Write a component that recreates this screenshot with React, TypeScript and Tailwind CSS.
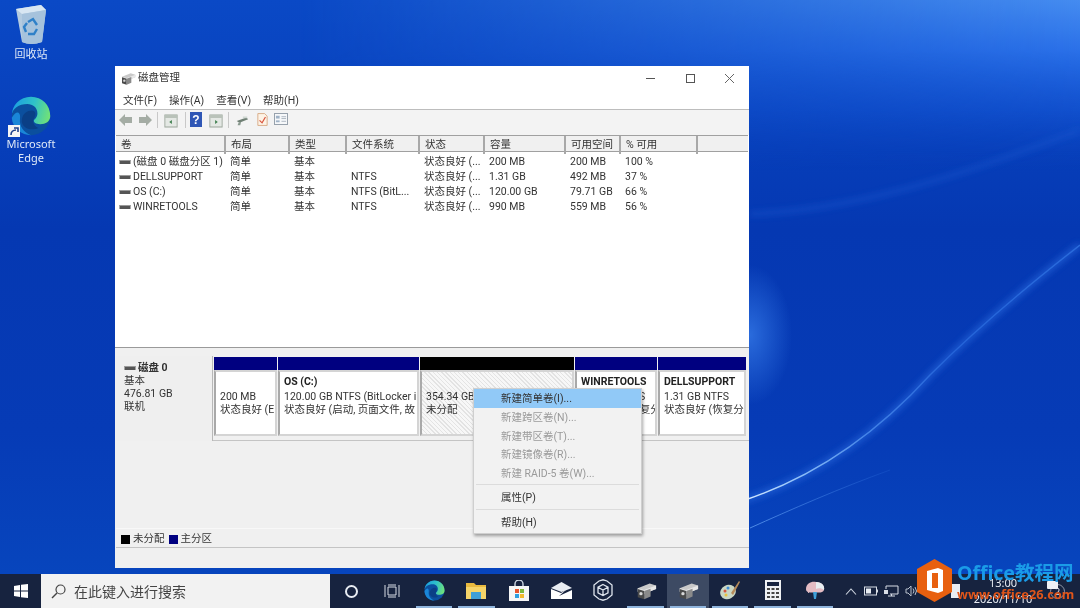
import { FC, ReactNode } from "react";

const font = "[font-family:'Roboto','Noto_Sans_CJK_SC',sans-serif]";
const deskFont = "[font-family:'Noto_Sans','Noto_Sans_CJK_SC',sans-serif]";

const columns = ["卷", "布局", "类型", "文件系统", "状态", "容量", "可用空间", "% 可用", ""];

const rows = [
  ["(磁盘 0 磁盘分区 1)", "简单", "基本", "", "状态良好 (...", "200 MB", "200 MB", "100 %"],
  ["DELLSUPPORT", "简单", "基本", "NTFS", "状态良好 (...", "1.31 GB", "492 MB", "37 %"],
  ["OS (C:)", "简单", "基本", "NTFS (BitL...", "状态良好 (...", "120.00 GB", "79.71 GB", "66 %"],
  ["WINRETOOLS", "简单", "基本", "NTFS", "状态良好 (...", "990 MB", "559 MB", "56 %"],
];

const DriveIcon: FC = () => (
  <svg width="12" height="8" viewBox="0 0 12 8" className="mr-[2px] shrink-0">
    <rect x="0.5" y="2" width="11" height="4" fill="#555" />
    <rect x="0.5" y="2" width="11" height="1" fill="#9a9a9a" />
  </svg>
);

const DiskToolIcon: FC<{ size?: number }> = ({ size = 16 }) => (
  <svg width={size} height={size} viewBox="0 0 24 24">
    <path d="M3 10 L16 5 L23 7 L23 11 L10 16 L3 14Z" fill="#c9c9c9" />
    <path d="M3 10 L10 12 L23 7 L23 11 L10 16 L3 14Z" fill="#e8e8e8" />
    <path d="M3 11 L10 13 L10 22 L3 20Z" fill="#4a4a4a" />
    <path d="M10 13 L17 10.5 L17 19 L10 22Z" fill="#8a8a8a" />
    <circle cx="6.5" cy="16" r="1.8" fill="#d8d8d8" />
  </svg>
);

const EdgeIcon: FC<{ size: number; id: string }> = ({ size, id }) => (
  <svg width={size} height={size} viewBox="0 0 48 48">
    <defs>
      <linearGradient id={`${id}-a`} x1="0" y1="0.3" x2="1" y2="0.5">
        <stop offset="0" stopColor="#1b9de2" />
        <stop offset="0.55" stopColor="#2fc2c8" />
        <stop offset="1" stopColor="#6fe07a" />
      </linearGradient>
    </defs>
    <circle cx="24" cy="24" r="21" fill="#0b4f9e" />
    <path d="M3 26 C4 38 14 45 24 45 C16 42 11 35 12 27 C13 19 8 17 3 26Z" fill="#1a86d8" />
    <path
      d="M3 24 C3 12 12 3 24 3 C36 3 45 12 45 24 C45 30 40 33 34 33 C29 33 27 31 27 29 C28 27 31 26 31 21 C31 15 26 11 20 11 C11 11 3 16 3 24Z"
      fill={`url(#${id}-a)`}
    />
    <path d="M14 28 C15 21 20 18 25 18 C28 18 30 21 28 25 C25 29 26 34 32 37 C24 41 13 37 14 28Z" fill="#0a3f86" />
  </svg>
);

const Toolbar: FC = () => (
  <div className="flex h-[25px] items-start bg-[#f3f3f3] pl-[3px] pt-[2px]">
    <svg width="35" height="16" viewBox="0 0 35 16" className="shrink-0">
      <path d="M1 8 L7 2 V5 H14 V11 H7 V14Z" fill="#a4aca4" />
      <path d="M34 8 L28 2 V5 H21 V11 H28 V14Z" fill="#a4aca4" />
    </svg>
    <div className="ml-[4px] h-[16px] w-px bg-[#c8c8c8]" />
    <svg width="14" height="14" viewBox="0 0 16 14" preserveAspectRatio="none" className="ml-[6px] mt-[2px]">
      <rect x="1" y="1" width="14" height="12" fill="#e4e8e4" stroke="#9aa59a" />
      <rect x="1" y="1" width="14" height="3" fill="#b9c2b9" />
      <path d="M9 6 L6 8 L9 10Z" fill="#3f7f4f" />
    </svg>
    <div className="ml-[7px] h-[16px] w-px bg-[#c8c8c8]" />
    <svg width="12" height="15" viewBox="0 0 12 15" className="ml-[4px]">
      <rect width="12" height="15" fill="#2f56b5" />
      <text x="6" y="12" textAnchor="middle" fontSize="12" fontWeight="700" fill="#fff" fontFamily="Liberation Sans, sans-serif">?</text>
    </svg>
    <svg width="14" height="14" viewBox="0 0 16 14" preserveAspectRatio="none" className="ml-[7px] mt-[2px]">
      <rect x="1" y="1" width="14" height="12" fill="#e4e8e4" stroke="#9aa59a" />
      <rect x="1" y="1" width="14" height="3" fill="#b9c2b9" />
      <path d="M7 6 L10 8 L7 10Z" fill="#3f7f4f" />
    </svg>
    <div className="ml-[5px] h-[16px] w-px bg-[#c8c8c8]" />
    <svg width="14" height="14" viewBox="0 0 16 14" className="ml-[6px] mt-[1px]">
      <path d="M2 8 L13 4 L15 6 L5 10Z" fill="#6f7f74" />
      <path d="M4 10 L7 9 L6 13 L3 13Z" fill="#8a9a90" />
      <rect x="9" y="3" width="5" height="2" fill="#cfd8d2" />
    </svg>
    <svg width="11" height="15" viewBox="0 0 13 16" className="ml-[8px]">
      <path d="M1 1 H9 L12 4 V15 H1Z" fill="#fdf3e6" stroke="#d4a47c" />
      <path d="M3 9 L6 12 L10 5" fill="none" stroke="#d8553f" strokeWidth="1.4" />
    </svg>
    <svg width="14" height="12" viewBox="0 0 15 13" className="ml-[6px] mt-px">
      <rect x="0.5" y="0.5" width="14" height="12" fill="#f6f8fa" stroke="#8f9aa6" />
      <rect x="2" y="3" width="4" height="3" fill="#9fb2c6" />
      <rect x="2" y="8" width="4" height="2" fill="#9fb2c6" />
      <path d="M8 4 H13 M8 6 H13 M8 9 H13" stroke="#aab4be" />
    </svg>
  </div>
);

const VolumeTable: FC = () => (
  <div className="flex-1 bg-white px-px">
    <div className="grid h-[17px] grid-cols-[110px_64px_57px_73px_65px_81px_55px_77px_1fr] border-y border-y-[#a0a0a0] bg-[#f0f0f0]">
      {columns.map((c, i) => (
        <div key={i} className="border-r-2 border-r-[#a8a8a8] pl-[5px] leading-[18px] text-[#333] last:border-r-0">
          {c}
        </div>
      ))}
    </div>
    <div className="pt-px">
      {rows.map((r) => (
        <div key={r[0]} className="grid h-[15px] grid-cols-[110px_64px_57px_73px_65px_81px_55px_77px_1fr] leading-[17px] text-[#333]">
          {r.map((cell, i) =>
            i === 0 ? (
              <div key={i} className="flex items-center pl-[3px] whitespace-nowrap">
                <DriveIcon />
                <span>{cell}</span>
              </div>
            ) : (
              <div key={i} className="pl-[4px] whitespace-nowrap">
                {cell}
              </div>
            )
          )}
        </div>
      ))}
    </div>
  </div>
);

const partitions = [
  { w: "w-[63px]", head: "bg-[#000080]", title: "", lines: ["200 MB", "状态良好 (E"] },
  { w: "w-[141px]", head: "bg-[#000080]", title: "OS  (C:)", lines: ["120.00 GB NTFS (BitLocker i", "状态良好 (启动, 页面文件, 故"] },
  { w: "w-[154px]", head: "bg-black", title: "", lines: ["354.34 GB", "未分配"], free: true },
  { w: "w-[82px]", head: "bg-[#000080]", title: "WINRETOOLS", lines: ["990 MB NTFS", "状态良好 (恢复分"] },
  { w: "w-[88px]", head: "bg-[#000080]", title: "DELLSUPPORT", lines: ["1.31 GB NTFS", "状态良好 (恢复分"] },
];

const DiskRow: FC = () => (
  <div className="flex h-[85px] border-b border-b-[#c4c4c4]">
    <div className="h-[85px] w-[97px] shrink-0 border-r border-r-[#b8b8b8] bg-[#efefef] pl-[8px] pt-[5px] leading-[13px] text-[#333]">
      <div className="flex items-center font-bold">
        <DriveIcon />
        磁盘 0
      </div>
      <div>基本</div>
      <div>476.81 GB</div>
      <div>联机</div>
    </div>
    <div className="flex gap-px pl-px pt-[1px]">
      {partitions.map((p) => (
        <div key={p.title + p.lines[0]} className={`${p.w} h-[79px] shrink-0`}>
          <div className={`h-[13px] ${p.head}`} />
          <div
            className={`h-[66px] overflow-hidden border-2 border-[#d4d4d4] border-l-[#a9a9a9] pl-[4px] leading-[13px] text-[#333] whitespace-nowrap ${
              p.free ? "border-[#9d9d9d] bg-[repeating-linear-gradient(45deg,#e3e3e3_0px,#e3e3e3_1px,#f7f7f7_1px,#f7f7f7_3px)]" : "bg-white"
            }`}
          >
            <div className="h-[18px] pt-[3px] font-bold text-[#222]">{p.title}</div>
            {p.lines.map((l) => (
              <div key={l} className="overflow-hidden">
                {l}
              </div>
            ))}
          </div>
        </div>
      ))}
    </div>
  </div>
);

const menu = [
  { t: "新建简单卷(I)...", active: true },
  { t: "新建跨区卷(N)...", off: true },
  { t: "新建带区卷(T)...", off: true },
  { t: "新建镜像卷(R)...", off: true },
  { t: "新建 RAID-5 卷(W)...", off: true },
  { sep: "my-[2px]" },
  { t: "属性(P)" },
  { sep: "my-[3px]" },
  { t: "帮助(H)" },
];

const ContextMenu: FC = () => (
  <div className="absolute left-[358px] top-[322px] w-[169px] border border-[#cfcfcf] bg-[#f2f2f2] pb-px text-[10.5px] shadow-[1px_2px_3px_rgba(0,0,0,0.35)]">
    {menu.map((m, i) =>
      m.sep ? (
        <div key={i} className={`mx-[2px] h-px bg-[#dcdcdc] ${m.sep}`} />
      ) : (
        <div
          key={i}
          className={`flex h-[18.7px] items-center pl-[27px] pt-[1.5px] ${m.active ? "bg-[#91c9f7] text-[#222]" : ""} ${m.off ? "text-[#9a9a9a]" : "text-[#333]"}`}
        >
          {m.t}
        </div>
      )
    )}
  </div>
);

const DiskWindow: FC = () => (
  <div className={`absolute left-[115px] top-[66px] flex h-[502px] w-[634px] flex-col bg-[#f0f0f0] text-[10.5px] ${font}`}>
    <div className="flex h-[24px] items-center justify-between bg-white pl-[5px]">
      <div className="flex items-center gap-[2px] text-[#333]">
        <DiskToolIcon />
        <span>磁盘管理</span>
      </div>
      <div className="flex h-full items-center">
        <div className="flex w-[40px] justify-center">
          <div className="h-px w-[9px] bg-[#555]" />
        </div>
        <div className="flex w-[40px] justify-center">
          <div className="h-[9px] w-[9px] border border-[#555]" />
        </div>
        <svg width="40" height="11" viewBox="0 0 40 11" className="mr-[-1px]">
          <path d="M15 1 L24 10 M24 1 L15 10" stroke="#666" strokeWidth="1" />
        </svg>
      </div>
    </div>
    <div className="flex h-[20px] items-center gap-[12px] border-b border-b-[#bdbdbd] bg-white pl-[8px] pt-[3px] text-[#333]">
      <span>文件(F)</span>
      <span>操作(A)</span>
      <span>查看(V)</span>
      <span>帮助(H)</span>
    </div>
    <Toolbar />
    <div className="flex h-[212px] flex-col overflow-hidden">
      <VolumeTable />
    </div>
    <div className="h-[3px] border-t border-t-[#9a9a9a]" />
    <div className="h-[6px] bg-[#f0f0f0]" />
    <div className="flex flex-1 flex-col pl-px">
      <DiskRow />
      <div className="flex-1" />
      <div className="flex h-[19px] items-center gap-[3px] border-t border-t-[#f8f8f8] pl-[5px] pt-[2px] text-[#333]">
        <span className="h-[9px] w-[9px] bg-black" />
        <span className="mr-[1px]">未分配</span>
        <span className="h-[9px] w-[9px] bg-[#000080]" />
        <span>主分区</span>
      </div>
      <div className="h-[21px] border-t border-t-[#c4c4c4]" />
    </div>
    <ContextMenu />
  </div>
);

const Wallpaper: FC = () => (
  <svg className="absolute inset-0 h-full w-full" viewBox="0 0 1080 574" preserveAspectRatio="none">
    <defs>
      <linearGradient id="wp-base" x1="0" y1="0" x2="0" y2="1">
        <stop offset="0" stopColor="#0a49c6" />
        <stop offset="0.4" stopColor="#0538b2" />
        <stop offset="0.75" stopColor="#063bb6" />
        <stop offset="1" stopColor="#0745bd" />
      </linearGradient>
      <linearGradient id="wp-top" x1="0" y1="0" x2="0" y2="1">
        <stop offset="0" stopColor="#458cf0" />
        <stop offset="0.3" stopColor="#2a70e8" />
        <stop offset="0.65" stopColor="#1556d4" stopOpacity="0.7" />
        <stop offset="1" stopColor="#0a44c0" stopOpacity="0" />
      </linearGradient>
      <linearGradient id="wp-fade" x1="0" y1="0" x2="1" y2="0">
        <stop offset="0" stopColor="#000" />
        <stop offset="1" stopColor="#fff" />
      </linearGradient>
      <mask id="wp-mask">
        <rect x="300" width="780" height="200" fill="url(#wp-fade)" />
      </mask>
      <radialGradient id="wp-glow">
        <stop offset="0" stopColor="#2a6bdc" />
        <stop offset="1" stopColor="#2a6bdc" stopOpacity="0" />
      </radialGradient>
      <linearGradient id="wp-streak" x1="750" y1="0" x2="1080" y2="0" gradientUnits="userSpaceOnUse">
        <stop offset="0" stopColor="#cfe6ff" />
        <stop offset="0.15" stopColor="#8fc0f8" />
        <stop offset="0.35" stopColor="#4484e8" />
        <stop offset="0.6" stopColor="#2463d8" />
        <stop offset="1" stopColor="#2a6bdc" />
      </linearGradient>
      <linearGradient id="wp-streak2" x1="750" y1="0" x2="900" y2="0" gradientUnits="userSpaceOnUse">
        <stop offset="0" stopColor="#4f8ce8" />
        <stop offset="1" stopColor="#1c5bd0" stopOpacity="0.3" />
      </linearGradient>
      <filter id="wp-soft">
        <feGaussianBlur stdDeviation="3" />
      </filter>
    </defs>
    <rect width="1080" height="574" fill="url(#wp-base)" />
    <rect width="1080" height="170" fill="url(#wp-top)" mask="url(#wp-mask)" />
    <ellipse cx="750" cy="335" rx="42" ry="70" fill="url(#wp-glow)" />
    <path d="M745 500 C820 475 880 430 930 375 C980 325 1035 280 1080 245" fill="none" stroke="#2766dc" strokeWidth="6" filter="url(#wp-soft)" opacity="0.7" />
    <path d="M745 500 C820 475 880 430 930 375 C980 325 1035 280 1080 245" fill="none" stroke="url(#wp-streak)" strokeWidth="1.4" />
    <path d="M750 528 C790 510 840 488 890 470" fill="none" stroke="url(#wp-streak2)" strokeWidth="1" />
    <path d="M750 214 C850 210 950 180 1080 130" fill="none" stroke="#1c5cd2" strokeWidth="5" opacity="0.45" filter="url(#wp-soft)" />
  </svg>
);

const DesktopIcons: FC = () => (
  <>
    <div className={`absolute left-0 top-[4px] flex w-[62px] flex-col items-center text-[11px] text-[#dfe9f7] ${deskFont}`}>
      <svg width="34" height="40" viewBox="0 0 34 40">
        <path d="M2 5 L27 1 L32 6 L28 38 Q17 42 8 38Z" fill="#b4cbe0" />
        <path d="M2 5 L27 1 L32 6 L8 10Z" fill="#d8e6f2" />
        <path d="M8 10 L32 6 L28 38 Q17 42 8 38Z" fill="#a6c2dc" />
        <path d="M14 18 L19 15 L23 21 M23 25 L20 30 L14 30 M12 28 L10 23 L13 19" fill="none" stroke="#2f80c8" strokeWidth="2.4" />
      </svg>
      <span className="mt-[3px] leading-[14px]">回收站</span>
    </div>
    <div className={`absolute left-0 top-[94px] flex w-[62px] flex-col items-center text-[11px] leading-[14px] text-[#dfe9f7] ${deskFont}`}>
      <div className="relative h-[43px] w-[44px]">
        <EdgeIcon size={44} id="edge-desk" />
        <div className="absolute bottom-0 left-[-1px] flex h-[12px] w-[12px] items-center justify-center bg-[#f4f4f4]">
          <svg width="9" height="9" viewBox="0 0 9 9">
            <path d="M1 8 C1 5 3 3 6 3 M4 1 H8 V5" fill="none" stroke="#1d3f8a" strokeWidth="1.6" />
          </svg>
        </div>
      </div>
      <span>Microsoft</span>
      <span>Edge</span>
    </div>
  </>
);

const TaskSlot: FC<{ on?: boolean; active?: boolean; children: ReactNode }> = ({ on, active, children }) => (
  <div className={`flex h-full w-[42.3px] flex-col ${active ? "bg-[#3d4a63]" : ""}`}>
    <div className="flex flex-1 items-center justify-center">{children}</div>
    <div className={`mx-[3px] h-[2px] ${on ? "bg-[#8fb4dc]" : ""}`} />
  </div>
);

const Taskbar: FC = () => (
  <div className={`relative flex h-[34px] items-center bg-[#17233f] ${deskFont}`}>
    <div className="flex h-full w-[41px] items-center justify-center">
      <svg width="14" height="14" viewBox="0 0 14 14">
        <path d="M0 2 L6 1 V6.5 H0Z M7 0.8 L14 0 V6.5 H7Z M0 7.5 H6 V13 L0 12Z M7 7.5 H14 V14 L7 13.2Z" fill="#fff" />
      </svg>
    </div>
    <div className="flex h-full w-[289px] items-center gap-[8px] bg-[#f2f2f2] pl-[10px] text-[14px] text-[#444]">
      <svg width="15" height="15" viewBox="0 0 15 15">
        <circle cx="9.5" cy="5.5" r="4.5" fill="none" stroke="#444" strokeWidth="1.2" />
        <path d="M6 9 L1 14" stroke="#444" strokeWidth="1.4" />
      </svg>
      <span>在此键入进行搜索</span>
    </div>
    <div className="flex h-full w-[42px] items-center justify-center">
      <div className="h-[13px] w-[13px] rounded-full border-2 border-[#e8ecf2]" />
    </div>
    <div className="flex h-full w-[40px] items-center justify-center">
      <svg width="16" height="14" viewBox="0 0 16 14">
        <path d="M1 1 V13 M15 1 V13 M4 3 H12 V11 H4Z M4 1 H12 M4 13 H12" fill="none" stroke="#d8dde6" />
      </svg>
    </div>
    <div className="ml-px flex h-full">
      <TaskSlot on={true}>
        <EdgeIcon size={23} id="edge-task" />
      </TaskSlot>
      <TaskSlot on={true}>
        <svg width="20" height="18" viewBox="0 0 20 18">
          <path d="M0 2 H8 L10 4 H20 V8 H0Z" fill="#e8b93f" />
          <rect y="6" width="20" height="12" fill="#f5d469" />
          <rect x="5" y="11" width="10" height="7" fill="#3f9fd8" />
        </svg>
      </TaskSlot>
      <TaskSlot>
        <svg width="20" height="21" viewBox="0 0 20 21">
          <path d="M6 6 V4 A4 4 0 0 1 14 4 V6" fill="none" stroke="#cfd8e4" strokeWidth="1.4" />
          <rect y="6" width="20" height="15" fill="#f6f6f6" />
          <rect x="6" y="9" width="4" height="4" fill="#e8552e" />
          <rect x="11" y="9" width="4" height="4" fill="#7cb83e" />
          <rect x="6" y="14" width="4" height="4" fill="#2f9fe0" />
          <rect x="11" y="14" width="4" height="4" fill="#f2b92e" />
        </svg>
      </TaskSlot>
      <TaskSlot>
        <svg width="21" height="17" viewBox="0 0 21 17">
          <path d="M0 6 L10.5 0 L21 6 L10.5 10Z" fill="#e8ecf2" />
          <path d="M0 7 L10 11 L16 7 L8 14 L21 8 V17 H0Z" fill="#fff" />
        </svg>
      </TaskSlot>
      <TaskSlot>
        <svg width="20" height="22" viewBox="0 0 20 22" fill="none" stroke="#dfe5ee" strokeWidth="1.3">
          <path d="M6 2 L10 0.8 L14 2 L19 6 V16 L14 20 L10 21.2 L6 20 L1 16 V6Z" />
          <path d="M10 5.5 L15 8.2 V13.8 L10 16.5 L5 13.8 V8.2Z M5 8.2 L10 11 L15 8.2 M10 11 V16.5" />
        </svg>
      </TaskSlot>
      <TaskSlot on={true}>
        <DiskToolIcon size={22} />
      </TaskSlot>
      <TaskSlot on={true} active={true}>
        <DiskToolIcon size={22} />
      </TaskSlot>
      <TaskSlot on={true}>
        <svg width="22" height="22" viewBox="0 0 22 22">
          <ellipse cx="9" cy="13" rx="8" ry="7" fill="#c9d6c4" transform="rotate(-25 9 13)" />
          <circle cx="6" cy="12" r="1.5" fill="#d8553f" />
          <circle cx="9" cy="9" r="1.5" fill="#3f8fd8" />
          <circle cx="7" cy="16" r="1.5" fill="#e8c23f" />
          <path d="M12 14 L20 2 L21 3 L14 16Z" fill="#b58a5a" />
        </svg>
      </TaskSlot>
      <TaskSlot on={true}>
        <svg width="16" height="20" viewBox="0 0 16 20">
          <rect width="16" height="20" fill="#eef0f3" />
          <rect x="2" y="2" width="12" height="4" fill="#17233f" />
          <path d="M2 8 H5 V10 H2Z M6.5 8 H9.5 V10 H6.5Z M11 8 H14 V10 H11Z M2 12 H5 V14 H2Z M6.5 12 H9.5 V14 H6.5Z M11 12 H14 V14 H11Z M2 16 H5 V18 H2Z M6.5 16 H9.5 V18 H6.5Z M11 16 H14 V18 H11Z" fill="#444" />
        </svg>
      </TaskSlot>
      <TaskSlot on={true}>
        <svg width="22" height="20" viewBox="0 0 22 20">
          <path d="M2 9 C2 3 8 1 12 2 C18 2 21 6 20 10 C19 13 14 13 11 12 C7 13 2 13 2 9Z" fill="#e4bcc4" />
          <path d="M12 2 C18 2 21 6 20 10 C18 8 14 8 12 9Z" fill="#e8eef2" />
          <path d="M9 12 H13 L12 19 H10Z" fill="#3f9fd8" />
        </svg>
      </TaskSlot>
    </div>
    <div className="ml-auto flex h-full items-center pr-[15px] text-[#e8ecf2]">
      <svg width="12" height="7" viewBox="0 0 12 7" className="mr-[7px]">
        <path d="M1 6.5 L6 1 L11 6.5" fill="none" stroke="#cfd6e0" strokeWidth="1.1" />
      </svg>
      <svg width="14" height="10" viewBox="0 0 14 10" className="mr-[6px]">
        <rect x="0.5" y="1" width="12" height="8" fill="none" stroke="#d8dde6" />
        <rect x="2" y="2.5" width="5" height="5" fill="#e8ecf2" />
        <rect x="13" y="3.5" width="1" height="3" fill="#d8dde6" />
      </svg>
      <svg width="15" height="12" viewBox="0 0 15 12" className="mr-[6px]">
        <path d="M2 1 H14 V9 H6 M2 1 V4 M4 11 H11 M7.5 9 V11" fill="none" stroke="#d8dde6" />
        <rect y="5" width="4" height="4" fill="#d8dde6" />
      </svg>
      <svg width="13" height="12" viewBox="0 0 13 12" className="mr-[33px]">
        <path d="M1 4 H3 L6 1 V11 L3 8 H1Z M8 3.5 Q10 6 8 8.5 M10 2 Q13 6 10 10" fill="none" stroke="#b8c0cc" />
      </svg>
      <div className="mr-[7px] h-[14px] w-[9px] bg-[#e8ecf2]" />
      <div className="mr-[11px] flex w-[72px] flex-col items-center text-[11px] leading-[16px]">
        <span>13:00</span>
        <span>2020/11/10</span>
      </div>
      <div className="relative flex h-[15px] w-[15px] items-center justify-center rounded-full border border-[#8f97a6] text-[9px] leading-none">
        <div className="absolute left-[-4px] top-[-4px] h-[8px] w-[11px] rounded-[1px] bg-[#eef1f5]" />
        <span className="relative">2</span>
      </div>
    </div>
  </div>
);

const Watermark: FC = () => (
  <div className="absolute left-[917px] top-[559px] flex items-start gap-[5px]">
    <svg width="35" height="43" viewBox="0 0 35 43">
      <path d="M17.5 0 L35 10 V33 L17.5 43 L0 33 V10Z" fill="#e8600f" />
      <path d="M21 9 L10 12 V31 L21 34 L26 32 V11Z" fill="#fff" />
      <path d="M15 14 H21 V29 H15Z" fill="#e8600f" />
    </svg>
    <div className={`flex flex-col ${deskFont}`}>
      <span className="text-[19.5px] leading-[27px] font-bold whitespace-nowrap text-[#1a9be8]">Office教程网</span>
      <span className="text-[12.8px] leading-[16px] font-bold whitespace-nowrap text-[#e0551a]">www.office26.com</span>
    </div>
  </div>
);

const App: FC = () => {
  return (
    <div className="relative flex h-[608px] w-[1080px] flex-col overflow-hidden blur-[0.5px]">
      <div className="relative flex-1">
        <Wallpaper />
        <DesktopIcons />
        <DiskWindow />
      </div>
      <Taskbar />
      <Watermark />
    </div>
  );
};

export default App;
